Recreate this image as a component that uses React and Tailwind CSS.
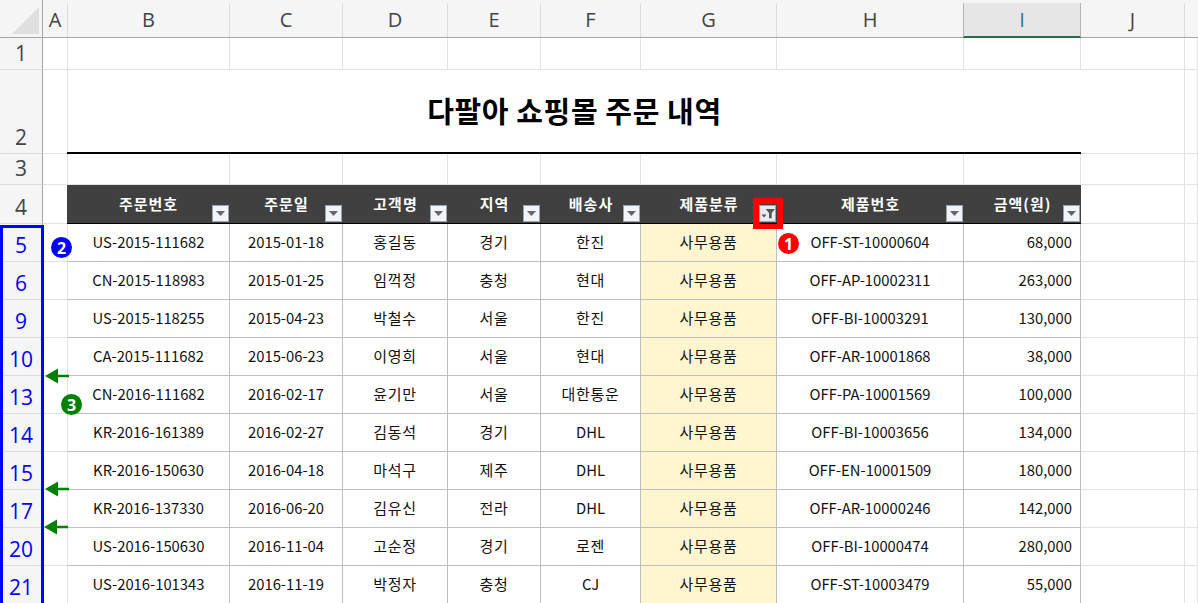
import React from "react";

const GRID = "grid grid-cols-[43px_24px_163px_113px_105px_93px_100px_136px_187px_117px_104px_13px]";
const FONT = "font-['Noto_Sans_CJK_KR','Noto_Sans',sans-serif]";
const LATIN = "font-['Open_Sans','Noto_Sans_CJK_KR',sans-serif]";

const rows = [
  ["5", "US-2015-111682", "2015-01-18", "홍길동", "경기", "한진", "OFF-ST-10000604", "68,000"],
  ["6", "CN-2015-118983", "2015-01-25", "임꺽정", "충청", "현대", "OFF-AP-10002311", "263,000"],
  ["9", "US-2015-118255", "2015-04-23", "박철수", "서울", "한진", "OFF-BI-10003291", "130,000"],
  ["10", "CA-2015-111682", "2015-06-23", "이영희", "서울", "현대", "OFF-AR-10001868", "38,000"],
  ["13", "CN-2016-111682", "2016-02-17", "윤기만", "서울", "대한통운", "OFF-PA-10001569", "100,000"],
  ["14", "KR-2016-161389", "2016-02-27", "김동석", "경기", "DHL", "OFF-BI-10003656", "134,000"],
  ["15", "KR-2016-150630", "2016-04-18", "마석구", "제주", "DHL", "OFF-EN-10001509", "180,000"],
  ["17", "KR-2016-137330", "2016-06-20", "김유신", "전라", "DHL", "OFF-AR-10000246", "142,000"],
  ["20", "US-2016-150630", "2016-11-04", "고순정", "경기", "로젠", "OFF-BI-10000474", "280,000"],
  ["21", "US-2016-101343", "2016-11-19", "박정자", "충청", "CJ", "OFF-ST-10003479", "55,000"],
];

const colHeads = ["A", "B", "C", "D", "E", "F", "G", "H", "I", "J"];
const tableHeads = ["주문번호", "주문일", "고객명", "지역", "배송사", "제품분류", "제품번호", "금액(원)"];

function RowHead({ n, blue }) {
  return (
    <div className={`bg-[#f5f5f5] border-r border-r-[#a6a6a6] border-b border-b-[#dcdcdc] flex items-end justify-center pb-[1px] text-[21px] leading-[29px] ${LATIN} ${blue ? "text-[#0000ff]" : "text-[#444444]"}`}>
      {n}
    </div>
  );
}

function Blank({ cls = "" }) {
  return <div className={`border-r border-b border-[#e2e2e2] ${cls}`} />;
}

function ColA() {
  return <div className="border-b border-[#e2e2e2]" />;
}

function FilterBtn({ active }) {
  return (
    <div className={`absolute right-[1px] bottom-[1px] w-[17px] h-[17px] border border-[#9ca3af] flex items-center justify-center ${active ? "bg-[#e9ebf1]" : "bg-[#f1f4fb]"}`}>
      {active ? (
        <svg width="15" height="15" viewBox="0 0 15 15">
          <path d="M1.5 8.6h5L4 11.6z" fill="#555" />
          <path d="M5.7 3H15l-3.3 4v5.2H9V7z" fill="#555" />
        </svg>
      ) : (
        <svg width="11" height="7" viewBox="0 0 11 7">
          <path d="M1 1h9L5.5 6z" fill="#666" />
        </svg>
      )}
    </div>
  );
}

function Cell({ children, cls = "" }) {
  return (
    <div className={`border-r border-b border-[#bfbfbf] flex items-center justify-center pb-[1px] text-[#111111] ${FONT} ${cls}`}>
      {children}
    </div>
  );
}

const LAT = "text-[14.8px]";
const KOR = "text-[15px] tracking-[0.7px]";

function Arrow({ cls }) {
  return (
    <svg className={`absolute ${cls}`} width="24" height="16" viewBox="0 0 24 16">
      <path d="M0 8L13 0.5V6.8H24V9.2H13V15.5z" fill="#008000" />
    </svg>
  );
}

function Badge({ n, cls }) {
  return (
    <div className={`absolute w-[21px] h-[21px] rounded-full flex items-center justify-center text-white font-bold text-[16px] leading-none ${LATIN} ${cls}`}>
      {n}
    </div>
  );
}

export default function App() {
  return (
    <div className={`relative w-[1198px] h-[603px] overflow-hidden bg-white ${FONT}`}>
      {/* column headers */}
      <div className={`${GRID} h-[38px] bg-[#f5f5f5] border-b-[1px] border-b-[#a6a6a6]`}>
        <div className="border-r border-r-[#a6a6a6] flex items-end justify-end pb-[3px] pr-[3px]">
          <svg width="27" height="27" viewBox="0 0 27 27">
            <path d="M27 0V27H0z" fill="#dfdfdf" />
          </svg>
        </div>
        {colHeads.map((c) => (
          <div
            key={c}
            className={`flex items-center justify-center text-[20px] ${LATIN} mt-[3px] ${
              c === "I"
                ? "bg-[#e6e6e6] text-[#217a9c] border-x border-x-[#b5b5b5] border-b-2 border-b-[#217346] -mb-[1px] -ml-[1px]"
                : c === "A"
                ? "text-[#444444]"
                : c === "B"
                ? "text-[#444444] border-x border-x-[#dcdcdc]"
                : "text-[#444444] border-r border-r-[#dcdcdc]"
            }`}
          >
            {c}
          </div>
        ))}
        <div />
      </div>

      {/* row 1 */}
      <div className={`${GRID} h-[32px]`}>
        <RowHead n="1" />
        <ColA />
        <Blank cls="border-l" />
        {colHeads.slice(2).map((c) => <Blank key={c} />)}
        <Blank />
      </div>

      {/* row 2 title */}
      <div className={`${GRID} h-[84px]`}>
        <RowHead n="2" />
        <ColA />
        <div className="col-span-8 border-b-2 border-b-black flex">
          <div className="flex-1 border-l border-l-[#e2e2e2] flex items-center justify-center pb-[1px] text-[29px] font-bold text-black tracking-[0.6px]">
            다팔아 쇼핑몰 주문 내역
          </div>
        </div>
        <Blank />
        <Blank />
      </div>

      {/* row 3 */}
      <div className={`${GRID} h-[31px]`}>
        <RowHead n="3" />
        <ColA />
        <Blank cls="border-l" />
        {colHeads.slice(2).map((c) => <Blank key={c} />)}
        <Blank />
      </div>

      {/* row 4 table header */}
      <div className={`${GRID} h-[39px]`}>
        <RowHead n="4" />
        <ColA />
        {tableHeads.map((h, i) => (
          <div key={h} className="relative bg-[#404040] border-b border-b-black flex items-start justify-center pt-[7px] text-[15px] font-bold leading-[24px] text-white tracking-[1px]">
            {h}
            <FilterBtn active={i === 5} />
          </div>
        ))}
        <Blank />
        <Blank />
      </div>

      {/* data rows */}
      {rows.map((r) => (
        <div key={r[0]} className={`${GRID} h-[38px]`}>
          <RowHead n={r[0]} blue />
          <ColA />
          <Cell cls={`${LAT} border-l border-l-[#e2e2e2]`}>{r[1]}</Cell>
          <Cell cls={LAT}>{r[2]}</Cell>
          <Cell cls={KOR}>{r[3]}</Cell>
          <Cell cls={KOR}>{r[4]}</Cell>
          <Cell cls={r[5] === "DHL" || r[5] === "CJ" ? LAT : KOR}>{r[5]}</Cell>
          <Cell cls={`bg-[#fff6d0] ${KOR}`}>사무용품</Cell>
          <Cell cls={LAT}>{r[6]}</Cell>
          <Cell cls={`!justify-end pr-[8px] ${LAT}`}>{r[7]}</Cell>
          <Blank />
          <Blank />
        </div>
      ))}

      {/* annotations */}
      <div className="absolute left-0 top-[225px] w-[44px] h-[400px] border-[3px] border-[#0000ff]" />
      <div className="absolute left-[753px] top-[198px] w-[30px] h-[31px] border-[6px] border-b-[5px] border-[#ff0000]" />
      <Badge n="1" cls="left-[778px] top-[233px] bg-[#ff0000]" />
      <Badge n="2" cls="left-[51px] top-[237px] bg-[#0000ff]" />
      <Badge n="3" cls="left-[61px] top-[394px] bg-[#008000]" />
      <Arrow cls="left-[45px] top-[368px]" />
      <Arrow cls="left-[45px] top-[481px]" />
      <Arrow cls="left-[44px] top-[519px]" />
    </div>
  );
}
